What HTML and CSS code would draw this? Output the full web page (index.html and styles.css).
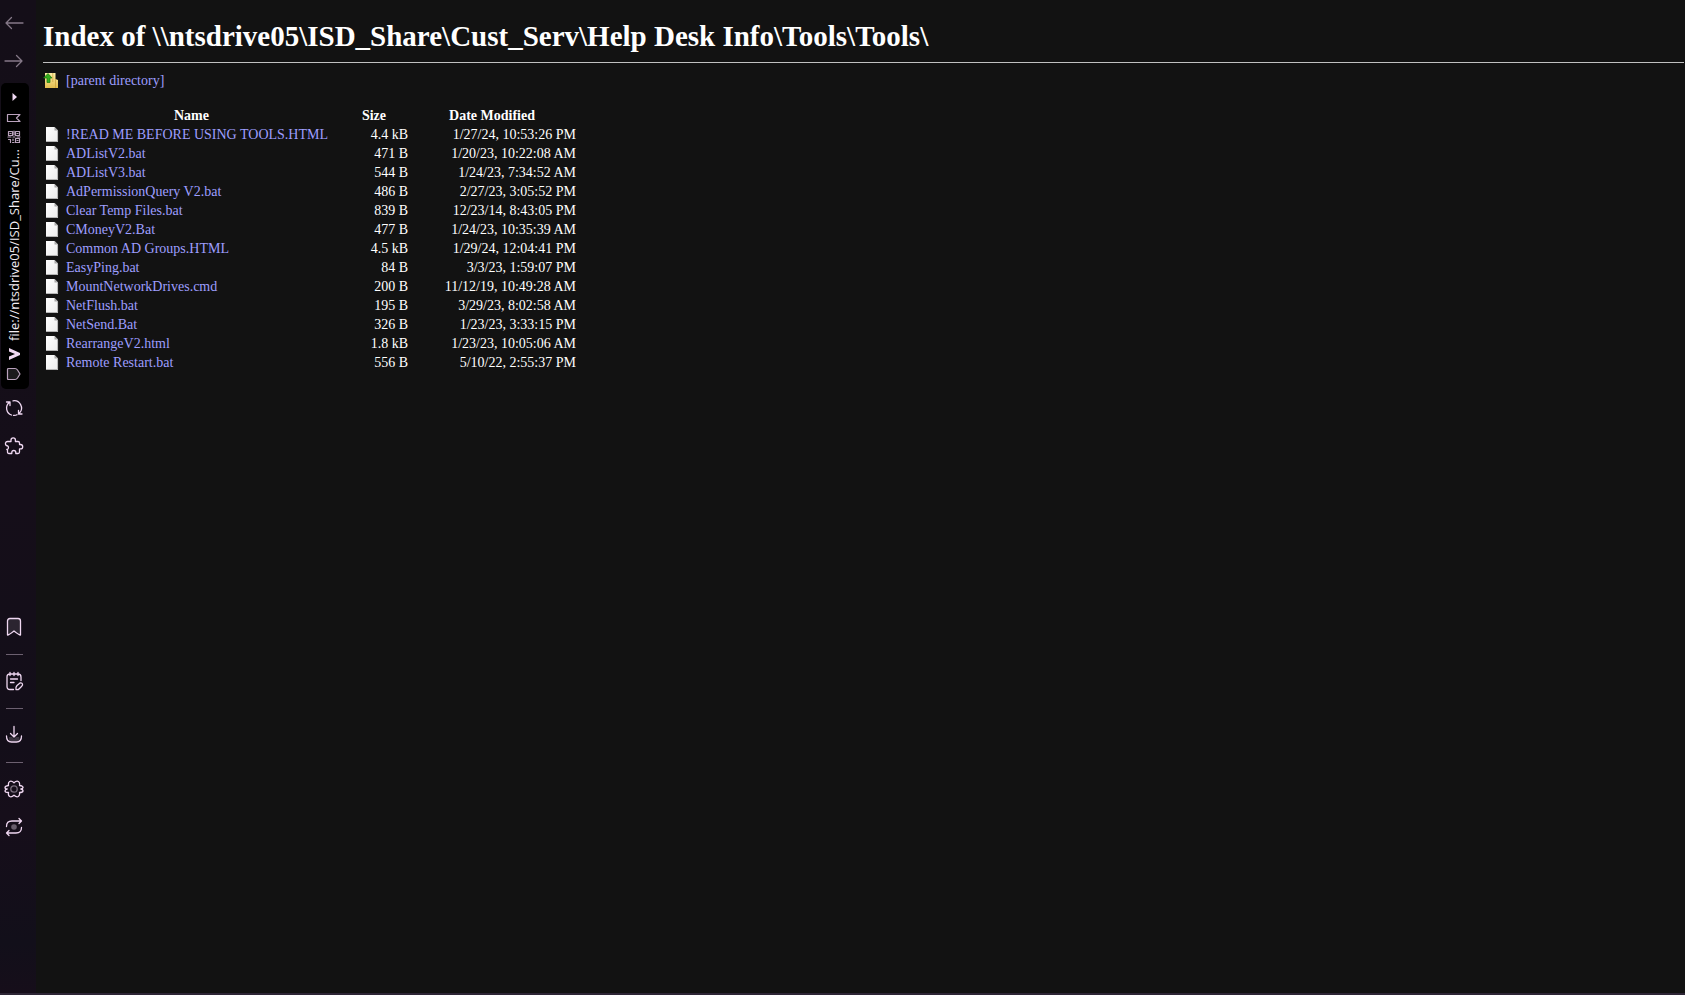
FILE: index.html
```
<!DOCTYPE html>
<html lang="en">
<head>
<meta charset="utf-8">
<title>Index of \\ntsdrive05\ISD_Share\Cust_Serv\Help Desk Info\Tools\Tools\</title>
<link rel="stylesheet" href="styles.css">
</head>
<body>
<svg class="defs" aria-hidden="true">
  <defs>
    <linearGradient id="paper" x1="0" y1="0" x2="1" y2="1"><stop offset="0" stop-color="#fff"/><stop offset="1" stop-color="#ececec"/></linearGradient>
    <linearGradient id="gold" x1="0" y1="0" x2="0" y2="1"><stop offset="0" stop-color="#fdf0a8"/><stop offset="1" stop-color="#e3bd4e"/></linearGradient>
  </defs>
  <symbol id="file" viewBox="0 0 14 16">
    <path d="M1 0h8.500L13 3.500V15H1z" fill="url(#paper)"/>
    <path d="M1 14.500h11.600V4" fill="none" stroke="#a5a5a5" stroke-width=".8"/>
    <path d="M9.500 0L13 3.500H9.500z" fill="#a8a8a8"/>
  </symbol>
</svg>
<div class="window">
  <nav class="sidebar" aria-label="Browser">
    <div class="group">
      <button class="tool dim" aria-label="Back"><svg viewBox="0 0 20 20"><path d="M19 10H2M7.500 4.500L2 10l5.500 5.500"/></svg></button>
      <button class="tool dim" aria-label="Forward"><svg viewBox="0 0 20 20"><path d="M1 10h17M12.500 4.500L18 10l-5.500 5.500"/></svg></button>
    </div>
    <div class="address">
      <button class="mini" aria-label="Expand"><svg viewBox="0 0 16 16"><path class="solid" d="M6.500 4l4.500 4-4.500 4z"/></svg></button>
      <button class="mini" aria-label="Bookmark page"><svg viewBox="0 0 16 16"><path class="mauve" d="M1.500 4.500h12.500l-3.500 3.500 3.500 3.500H1.500z"/></svg></button>
      <button class="mini" aria-label="QR code"><svg viewBox="0 0 16 16"><path class="mauve" d="M2.500 2.500h4v4h-4zM9.500 2.500h4v4h-4zM9.500 9.500h4v4h-4zM4 4.500h1M11 4.500h1M11 11.500h1M8 2v4M2 8h3M7 8h2M11 8h3M2.500 10.500h2v3M7 10v1.500M6.500 13.500h1.500"/></svg></button>
      <input class="url" type="text" aria-label="Address" value="file://ntsdrive05/ISD_Share/Cu…" readonly>
      <button class="mini" aria-label="Site"><svg viewBox="0 0 16 16"><path class="solid" d="M3 2l11 5v2L3 14v-3.500L9 8 3 5.500z"/></svg></button>
      <button class="mini tag" aria-label="Page actions"><svg viewBox="0 0 16 16"><path class="mauve filled" d="M2.500 2.500h6.500q1.500 0 2.500 1.500l2.500 4-2.500 4q-1 1.500-2.500 1.500H2.500q-1 0-1-1v-9q0-1 1-1z"/></svg></button>
    </div>
    <div class="group">
      <button class="tool" aria-label="Reload"><svg viewBox="0 0 20 20"><path d="M7.500 17A7.300 7.300 0 0 1 5 4.700M2.500 4h3.500v3.500M9 2.800A7.300 7.300 0 0 1 15.500 15M18 16h-3.500v-3.500M13 16.700q-1.500.8-3.500.6"/></svg></button>
      <button class="tool" aria-label="Extensions"><svg viewBox="0 0 20 20"><path d="M7 5.500V4a2.200 2.200 0 0 1 4.400 0v1.500H14q1.500 0 1.500 1.500v1.500h1a2.200 2.200 0 0 1 0 4.400h-1V16q0 1.500-1.500 1.500h-2.200v-1a2 2 0 0 0-4 0v1H5q-1.500 0-1.500-1.500v-2.500h-.7a2 2 0 0 0 1-3.500Q1 9.500 1.500 7q.5-1.500 2-1.500z"/></svg></button>
    </div>
    <div class="group lower">
      <button class="tool" aria-label="Bookmarks"><svg viewBox="0 0 20 20"><path class="filled" d="M6 1.500h8q2.500 0 2.500 2.500v14q-1.500 0-6.500-4-5 4-6.500 4V4q0-2.500 2.500-2.500z"/></svg></button>
      <hr class="rule">
      <button class="tool" aria-label="Notes"><svg viewBox="0 0 20 20"><path d="M9.500 18.500H6q-3 0-3-3V6q0-3 3-3h8q3 0 3 3v3.500M6 1.500v3M10 1.500v3M14 1.500v3M6.500 8h7M6.500 11.500H10M12 18.500q-.5-2.500 1-4l3-2.500q2-.5 2.500 1 .5 1-1 2.500l-2.500 2.500q-1 1-3 .5z"/></svg></button>
      <hr class="rule">
      <button class="tool" aria-label="Downloads"><svg viewBox="0 0 20 20"><path class="shade" d="M5 12h3l2 2 2-2h3l1 4H5z"/><path d="M10 1.500V12M6.500 8.500L10 12l3.500-3.500M2.500 11q0 6 5 6h5q5 0 5-6"/></svg></button>
      <hr class="rule">
      <button class="tool" aria-label="Settings"><svg viewBox="0 0 20 20"><path d="M10 3.800Q12.500 1.500 14.300 2.500T15.500 6.500Q19.300 7 19 8.500T16.800 10Q19.300 10.500 19 12t-3.500 1.500q.5 3-1.200 4t-4.300-1.300q-2.500 2.300-4.300 1.300t-1.200-4Q1 13.500 1 12t2.200-2Q1 10 1 8.500T4.500 6.500Q4 3.500 5.700 2.500t4.300 1.300z"/><circle class="faint" cx="10" cy="10" r="3.200"/></svg></button>
      <button class="tool" aria-label="Sync"><svg viewBox="0 0 20 20"><circle class="dot" cx="10" cy="10" r="2.800"/><path d="M2.500 9.500q0-5.500 5.500-5.500h9.500M15 1.500L17.500 4 15 6.500M17.500 10.500q0 5.500-5.500 5.500H2.500M5 13.500L2.500 16 5 18.500"/></svg></button>
    </div>
  </nav>
  <main class="page">
    <h1 class="title">Index of \\ntsdrive05\ISD_Share\Cust_Serv\Help Desk Info\Tools\Tools\</h1>
    <a class="entry parent" href="#"><svg class="folder" viewBox="0 0 16 16" aria-hidden="true"><path d="M2 0h10.500v6l2.500 1v8H2z" fill="url(#gold)"/><path d="M12.500 6v9M9.800 0v9" fill="none" stroke="#c79d36" stroke-width=".7"/><path d="M5 .500L9 5H7v4.500H4V5H.500z" fill="#35ad20" stroke="#187a0d" stroke-width=".7"/></svg>[parent directory]</a>
    <table class="listing">
      <thead><tr><th class="name">Name</th><th class="size">Size</th><th class="date">Date Modified</th></tr></thead>
      <tbody>
        <tr><td><a class="entry" href="#"><svg class="icon"><use href="#file"/></svg>!READ ME BEFORE USING TOOLS.HTML</a></td><td>4.4 kB</td><td>1/27/24, 10:53:26 PM</td></tr>
        <tr><td><a class="entry" href="#"><svg class="icon"><use href="#file"/></svg>ADListV2.bat</a></td><td>471 B</td><td>1/20/23, 10:22:08 AM</td></tr>
        <tr><td><a class="entry" href="#"><svg class="icon"><use href="#file"/></svg>ADListV3.bat</a></td><td>544 B</td><td>1/24/23, 7:34:52 AM</td></tr>
        <tr><td><a class="entry" href="#"><svg class="icon"><use href="#file"/></svg>AdPermissionQuery V2.bat</a></td><td>486 B</td><td>2/27/23, 3:05:52 PM</td></tr>
        <tr><td><a class="entry" href="#"><svg class="icon"><use href="#file"/></svg>Clear Temp Files.bat</a></td><td>839 B</td><td>12/23/14, 8:43:05 PM</td></tr>
        <tr><td><a class="entry" href="#"><svg class="icon"><use href="#file"/></svg>CMoneyV2.Bat</a></td><td>477 B</td><td>1/24/23, 10:35:39 AM</td></tr>
        <tr><td><a class="entry" href="#"><svg class="icon"><use href="#file"/></svg>Common AD Groups.HTML</a></td><td>4.5 kB</td><td>1/29/24, 12:04:41 PM</td></tr>
        <tr><td><a class="entry" href="#"><svg class="icon"><use href="#file"/></svg>EasyPing.bat</a></td><td>84 B</td><td>3/3/23, 1:59:07 PM</td></tr>
        <tr><td><a class="entry" href="#"><svg class="icon"><use href="#file"/></svg>MountNetworkDrives.cmd</a></td><td>200 B</td><td>11/12/19, 10:49:28 AM</td></tr>
        <tr><td><a class="entry" href="#"><svg class="icon"><use href="#file"/></svg>NetFlush.bat</a></td><td>195 B</td><td>3/29/23, 8:02:58 AM</td></tr>
        <tr><td><a class="entry" href="#"><svg class="icon"><use href="#file"/></svg>NetSend.Bat</a></td><td>326 B</td><td>1/23/23, 3:33:15 PM</td></tr>
        <tr><td><a class="entry" href="#"><svg class="icon"><use href="#file"/></svg>RearrangeV2.html</a></td><td>1.8 kB</td><td>1/23/23, 10:05:06 AM</td></tr>
        <tr><td><a class="entry" href="#"><svg class="icon"><use href="#file"/></svg>Remote Restart.bat</a></td><td>556 B</td><td>5/10/22, 2:55:37 PM</td></tr>
      </tbody>
    </table>
  </main>
</div>
</body>
</html>
```
FILE: styles.css
```
* { box-sizing: border-box; }

body {
  margin: 0;
  background: #121212;
  color: #fff;
  font: 14px/19px "Liberation Serif", "Times New Roman", serif;
}

.defs { position: absolute; width: 0; height: 0; }

.window {
  display: flex;
  min-height: 100vh;
  border-bottom: 2px solid #2d2535;
}

/* Browser side strip */
.sidebar {
  display: flex;
  flex-direction: column;
  flex: none;
  width: 36px;
  padding: 4px 7px 4px 1px;
  background: linear-gradient(#140e18, #150e19 50%, #130e19 75%, #160e1a 82%, #120f1a 95%, #160e1a);
}

.group { display: flex; flex-direction: column; width: 26px; }
.lower { margin-block: auto; }

.tool, .mini {
  display: grid;
  place-items: center;
  padding: 0;
  border: 0;
  background: none;
}
.tool { height: 38px; }
.tool svg { width: 20px; height: 20px; }
.mini svg { width: 16px; height: 16px; }

.tool path, .tool circle, .mini path {
  fill: none;
  stroke: #f0d8f2;
  stroke-width: 1.3;
  stroke-linecap: round;
  stroke-linejoin: round;
}
.tool.dim path { stroke: #857888; }
.mini .mauve { stroke: #baa2bd; stroke-width: 1.2; }
.mini .solid { fill: #f0d8f2; stroke: none; }
.tool .filled { fill: #2b2430; }
.mini .filled { fill: #1c1a1d; }
.tool .shade { fill: #3b3440; stroke: none; }
.tool .faint { stroke: #776b7a; }
.tool .dot { fill: #685d6b; stroke: none; }

.rule {
  width: 17px;
  height: 1px;
  margin: 8px auto 7px;
  border: 0;
  background: #6c6070;
}

.address {
  display: flex;
  flex-direction: column;
  margin-top: 3px;
  padding: 3px 2px 4px 0;
  border-radius: 5px;
  background: #000;
}
.mini { height: 19px; }
.mini:first-child { height: 22px; }
.tag { height: 22px; }

.url {
  width: 26px;
  height: 198px;
  padding: 0;
  border: 0;
  outline: 0;
  background: none;
  color: #f4eef5;
  font: 13px/26px "Open Sans", "Noto Sans", sans-serif;
  writing-mode: vertical-rl;
  transform: rotate(180deg);
}
.url { padding-top: 3px; }

/* Directory listing */
.page { flex: 1; min-width: 0; padding: 20px 1px 0 7px; }

.title {
  margin: 0 0 8px;
  padding-bottom: 9px;
  border-bottom: 1px solid #c0c0c0;
  font-size: 29px;
  line-height: 33px;
}

.entry {
  display: inline-flex;
  align-items: center;
  gap: 7px;
  color: #9e9eff;
  text-decoration: none;
  white-space: nowrap;
}
.entry:hover { text-decoration: underline; }
.parent { display: flex; width: fit-content; }
.folder { width: 16px; height: 16px; }
.icon { width: 14px; height: 16px; margin-left: 2px; }

.listing { margin-top: 16px; border-collapse: collapse; }
.listing th, .listing td { padding: 0; white-space: nowrap; }
.listing td + td { padding-left: 28px; text-align: right; }
.listing td a { display: flex; }
.name { width: 297px; }
.size { width: 68px; }
.date { width: 168px; }
```
